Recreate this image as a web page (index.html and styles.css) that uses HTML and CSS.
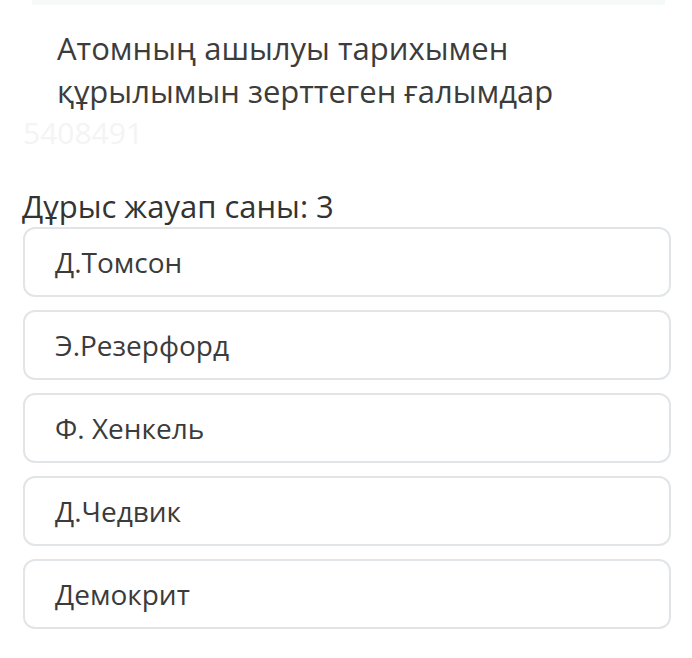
FILE: index.html
```html
<!DOCTYPE html>
<html lang="kk">
<head>
  <meta charset="UTF-8">
  <meta name="viewport" content="width=device-width, initial-scale=1.0">
  <title>Сұрақ</title>
  <link rel="stylesheet" href="styles.css">
</head>
<body>
  <div class="top-edge"></div>
  <div class="question">
    <h1 class="question-title">Атомның ашылуы тарихымен құрылымын зерттеген ғалымдар</h1>
    <div class="watermark">5408491</div>
  </div>
  <div class="answer-count">Дұрыс жауап саны: 3</div>
  <div class="options">
    <div class="option">Д.Томсон</div>
    <div class="option">Э.Резерфорд</div>
    <div class="option">Ф. Хенкель</div>
    <div class="option">Д.Чедвик</div>
    <div class="option">Демокрит</div>
  </div>
</body>
</html>
```

FILE: styles.css
```css
body {
  margin: 0;
  background: #fff;
  font-family: "Open Sans", "Noto Sans", sans-serif;
  color: #3a3a3a;
}
.top-edge {
  height: 5px;
  margin: 0 27px 0 32px;
  background: #f5faf8;
}
.question {
  padding: 22px 40px 0 57px;
}
.question-title {
  margin: 0;
  width: 540px;
  font-size: 31px;
  font-weight: 400;
  line-height: 43px;
  color: #3c3c3c;
}
.watermark {
  margin: 4px 0 0 -34px;
  font-size: 30px;
  line-height: 32px;
  color: #f4f4f4;
}
.answer-count {
  margin: 39px 0 0 22px;
  font-size: 31px;
  line-height: 36px;
  color: #333;
}
.options {
  display: flex;
  flex-direction: column;
  gap: 13px;
  margin: 3px 21px 0 23px;
}
.option {
  height: 66px;
  display: flex;
  align-items: center;
  padding-left: 30px;
  border: 2px solid #e2e5e7;
  border-radius: 12px;
  font-size: 28px;
  color: #3b3b3b;
}
```
